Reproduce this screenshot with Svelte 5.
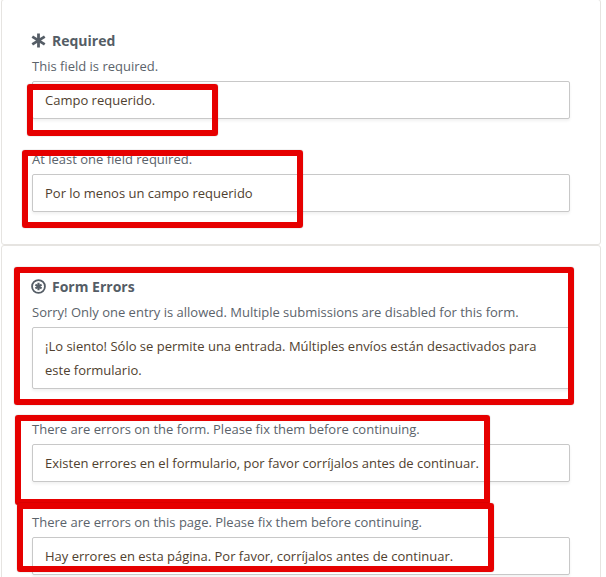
<script lang="ts">
	const sections = [
		{
			title: 'Required',
			icon: 'asterisk',
			fields: [
				{ label: 'This field is required.', value: 'Campo requerido.' },
				{ label: 'At least one field required.', value: 'Por lo menos un campo requerido' },
			],
		},
		{
			title: 'Form Errors',
			icon: 'error',
			fields: [
				{
					label: 'Sorry! Only one entry is allowed. Multiple submissions are disabled for this form.',
					value: '¡Lo siento! Sólo se permite una entrada. Múltiples envíos están desactivados para este formulario.',
				},
				{
					label: 'There are errors on the form. Please fix them before continuing.',
					value: 'Existen errores en el formulario, por favor corríjalos antes de continuar.',
				},
				{
					label: 'There are errors on this page. Please fix them before continuing.',
					value: 'Hay errores en esta página. Por favor, corríjalos antes de continuar.',
				},
			],
		},
	];

	// red annotation boxes drawn over the form
	const marks = [
		{ x: 27, y: 84, w: 191, h: 52 },
		{ x: 22, y: 150, w: 281, h: 78 },
		{ x: 14, y: 267, w: 560, h: 138 },
		{ x: 15, y: 415, w: 475, h: 90 },
		{ x: 17, y: 503, w: 477, h: 69 },
	];
</script>

<div class="page">
	{#each sections as section}
		<section class="card">
			<h3 class="title">
				{#if section.icon === 'asterisk'}
					<svg width="15" height="15" viewBox="0 0 14 14" fill="none" stroke="currentColor" stroke-width="2.6">
						<path d="M7 0.5v13M1.2 3.4l11.6 7.2M12.8 3.4L1.2 10.6"/>
					</svg>
				{:else}
					<svg width="15" height="15" viewBox="0 0 14 14" fill="none" stroke="currentColor">
						<circle cx="7" cy="7" r="6" stroke-width="1.7"/>
						<path d="M7 3.6v6.8M4.1 5.3l5.8 3.4M9.9 5.3L4.1 8.7" stroke-width="2"/>
					</svg>
				{/if}
				<span>{section.title}</span>
			</h3>
			{#each section.fields as field}
				<div class="field">
					<p class="label">{field.label}</p>
					<div class="input">{field.value}</div>
				</div>
			{/each}
		</section>
	{/each}

	{#each marks as m}
		<div class="mark" style="left:{m.x}px;top:{m.y}px;width:{m.w}px;height:{m.h}px"></div>
	{/each}
</div>

<style>
	:global(body) {
		margin: 0;
		background: #fff;
	}

	.page {
		position: relative;
		width: 606px;
		height: 577px;
		overflow: hidden;
		font-family: "Open Sans", "Liberation Sans", sans-serif;
		font-size: 13px;
		background: #fff;
	}

	.card {
		box-sizing: border-box;
		width: 600px;
		margin-left: 1px;
		padding: 31px 30px 0;
		height: 244px;
		border: 1px solid #e6e4e1;
		border-radius: 3px;
		background: #fff;
	}

	.card:first-child {
		margin-top: -1px;
		height: 246px;
	}

	.card + .card {
		height: 360px;
	}

	.title {
		display: flex;
		align-items: center;
		gap: 6px;
		height: 18px;
		margin: 0 0 8px -1px;
		font-size: 14px;
		font-weight: 700;
		color: #555d66;
	}

	.field {
		margin-bottom: 31px;
	}

	.field:last-child {
		margin-bottom: 0;
	}

	.label {
		margin: 0 0 6px;
		line-height: 18px;
		color: #5b636b;
	}

	.input {
		box-sizing: border-box;
		width: 538px;
		padding: 6px 12px;
		line-height: 24px;
		color: #50412f;
		background: #fff;
		border: 1px solid #c8c8c8;
		border-radius: 2px;
		box-shadow: 0 2px 3px rgba(0, 0, 0, 0.06);
	}

	.mark {
		position: absolute;
		box-sizing: border-box;
		border: 6px solid #e60000;
		border-radius: 3px;
		box-shadow: 0 0 1px rgba(0, 0, 0, 0.5);
	}
</style>
